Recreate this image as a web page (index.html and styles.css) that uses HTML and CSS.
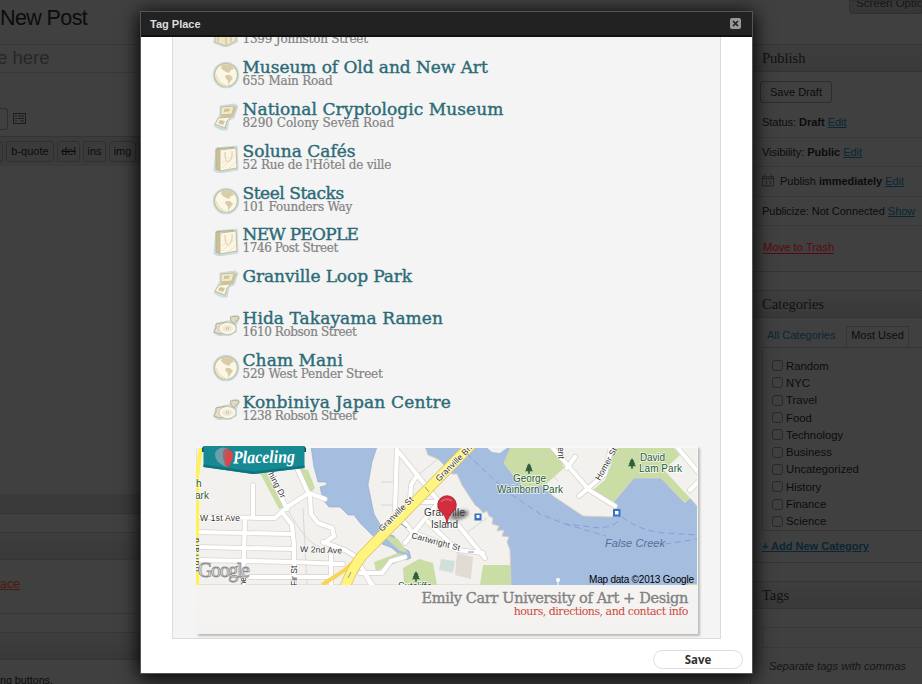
FILE: index.html
```html
<!DOCTYPE html>
<html lang="en">
<head>
<meta charset="utf-8">
<title>New Post</title>
<link rel="stylesheet" href="styles.css">
</head>
<body>
<svg class="defs" width="0" height="0" aria-hidden="true">
  <symbol id="globe" viewBox="0 0 28 28"><circle cx="14" cy="14" r="13.3" fill="#c5dde3"/><circle cx="14" cy="14" r="11.4" fill="#fbf7e8" stroke="#c9bd98" stroke-width="1.2"/><path d="M10 4Q15 2 20 5L22 8 19 9 17 12 14 11 11 9 9 7zM14 14L18 14 21 17 18 21 16 24 16 20 13 16z" fill="#d9cda9"/><path d="M4 14Q6 23 15 25" fill="none" stroke="#ece2c4" stroke-width="2"/></symbol>
  <symbol id="printer" viewBox="0 0 28 28"><path d="M8 3L23 1 26 3 22 15 17 17 15 27 9 27 2 23 6 15 8 11z" fill="#c8dde0" stroke="#c8dde0" stroke-width="1" stroke-linejoin="round"/><path d="M9 4L22 3 20 11 9 12z" fill="#f1e8ca" stroke="#c9bd98"/><path d="M22 3L25 4 21 14 9 15 9 12 20 11z" fill="#d0c29a"/><path d="M7 15L19 14 15 18 13 25 3 21 6 16z" fill="#fbf6e4" stroke="#c9bd98"/><path d="M8 17L13 18 11 22 6 20zM12 6l6-.5-1 3-5 .5z" fill="#cfc3a0"/></symbol>
  <symbol id="bag" viewBox="0 0 28 28"><path d="M4 3L25 1 26 25 7 28 2 26z" fill="#c8dde0" stroke="#c8dde0" stroke-width="1" stroke-linejoin="round"/><path d="M4 4L8 5 8 26 4 24z" fill="#cdbf98" stroke="#b5aa86" stroke-width=".7"/><path d="M8 5L24 3 25 23 8 26z" fill="#fbf6e4" stroke="#c9bd98"/><path d="M5 3.5l17-1" stroke="#b5aa86"/><path d="M13 7Q13 17 16 17Q21 14 20 6" fill="none" stroke="#e0cfae" stroke-width="1.2"/><path d="M10 18l7-6M10 23L24 10M16 24l8-7" stroke="#f0e6cf"/></symbol>
  <symbol id="plate" viewBox="0 0 28 28"><path d="M4 11L18 8 18 4 26 3 28 6 25 13 25 20 18 24 6 24 1 21 2 17z" fill="#c9dddf"/><path d="M4 12L14 10 23 13 23 20 8 22 2 20 4 16z" fill="#e6dec7" stroke="#b9b296"/><path d="M18 6Q21 3 27 5Q27 8 24 9L22 12 20 10z" fill="#e0d8bf" stroke="#b9b296"/><ellipse cx="15.500" cy="16.500" rx="8.700" ry="6" fill="#fbf8eb" stroke="#cbc3a8"/><ellipse cx="15.500" cy="16.500" rx="5.500" ry="3.600" fill="#efe9d7"/><path d="M14 18l1-3M16 18l1-3" stroke="#cbc3a8"/></symbol>
  <symbol id="box" viewBox="0 0 28 28"><path d="M3 14L25 14 26 23 14 29 1 24z" fill="#c8dde0"/><path d="M3 14L14 18 24 14 24 22 14 27 3 23z" fill="#efe5c6" stroke="#c9bd98"/><path d="M14 18v8M6 15v8M19 16v7" stroke="#d4c79f" stroke-width="1.5"/></symbol>
  <symbol id="tree" viewBox="0 0 10 13"><path d="M5 0L8 4 7 4 9 7 8 7 10 10 6 10 6 13 4 13 4 10 0 10 2 7 1 7 3 4 2 4z" fill="#2f5e3e"/></symbol>
</svg>

<div class="page">
  <main class="editor">
    <h1>New Post</h1>
    <div class="title-input">e here</div>
    <div class="media"><span class="media-btn"></span>
      <svg width="13" height="11" viewBox="0 0 13 11"><rect x=".5" y=".5" width="12" height="10" fill="none" stroke="#1c1c1c"/><path d="M2 3h2M2 5.5h2M2 8h2M5 3h6M5 5.5h6M7 8h4" stroke="#1c1c1c"/></svg>
    </div>
    <div class="quicktags"><span class="qt stub"></span><span class="qt q1">b-quote</span><span class="qt q2"><s>del</s></span><span class="qt q2">ins</span><span class="qt q3">img</span><span class="qt q3"></span></div>
    <div class="textarea"></div>
    <div class="editor-foot"></div>
    <section class="lbox first"><div class="bar"></div><p class="link">ace</p></section>
    <section class="lbox"><div class="bar"></div><p>ng buttons.</p></section>
  </main>
  <aside class="side">
    <div class="screen-options">Screen Options</div>
    <section class="pbox publish">
      <h2>Publish</h2>
      <span class="draft">Save Draft</span>
      <p class="r1">Status: <b>Draft</b> <a>Edit</a></p>
      <p class="r2">Visibility: <b>Public</b> <a>Edit</a></p>
      <p class="r3"><svg width="12" height="13" viewBox="0 0 13 13"><path d="M.5 2.5h12v10H.5zM.5 4.5h12M3 0v3M10 0v3M4 7h1v4M8 7h1v4" fill="none" stroke="#222"/></svg>Publish <b>immediately</b> <a>Edit</a></p>
      <p class="r4">Publicize: Not Connected <a>Show</a></p>
      <p class="trash"><span>Move to Trash</span></p>
    </section>
    <section class="pbox cats">
      <h2>Categories</h2>
      <div class="tabs"><span class="all">All Categories</span><span class="most">Most Used</span></div>
      <ul><li><i></i>Random</li><li><i></i>NYC</li><li><i></i>Travel</li><li><i></i>Food</li><li><i></i>Technology</li><li><i></i>Business</li><li><i></i>Uncategorized</li><li><i></i>History</li><li><i></i>Finance</li><li><i></i>Science</li></ul>
      <a class="add">+ Add New Category</a>
    </section>
    <section class="pbox tags">
      <h2>Tags</h2>
      <div class="tag-input"></div>
      <em>Separate tags with commas</em>
    </section>
  </aside>
</div>

<div class="modal">
  <header><span>Tag Place</span><svg width="11" height="11" viewBox="0 0 11 11"><rect width="11" height="11" rx="2" fill="#999"/><path d="M3 3l5 5M8 3l-5 5" stroke="#222" stroke-width="1.7"/></svg></header>
  <div class="panel">
    <ul class="places">
      <li><svg><use href="#box"/></svg><div><h3>Emily Carr University</h3><p>1399 Johnston Street</p></div></li>
      <li><svg><use href="#globe"/></svg><div><h3 class="t1">Museum of Old and New Art</h3><p>655 Main Road</p></div></li>
      <li><svg><use href="#printer"/></svg><div><h3 class="t2">National Cryptologic Museum</h3><p class="wide">8290 Colony Seven Road</p></div></li>
      <li><svg><use href="#bag"/></svg><div><h3 class="t3">Soluna Cafés</h3><p>52 Rue de l'Hôtel de ville</p></div></li>
      <li><svg><use href="#globe"/></svg><div><h3 class="t4">Steel Stacks</h3><p>101 Founders Way</p></div></li>
      <li><svg><use href="#bag"/></svg><div><h3 class="t5">NEW PEOPLE</h3><p class="tight">1746 Post Street</p></div></li>
      <li><svg><use href="#printer"/></svg><div><h3 class="t6">Granville Loop Park</h3></div></li>
      <li><svg><use href="#plate"/></svg><div><h3 class="t7">Hida Takayama Ramen</h3><p class="tight">1610 Robson Street</p></div></li>
      <li><svg><use href="#globe"/></svg><div><h3 class="t8">Cham Mani</h3><p>529 West Pender Street</p></div></li>
      <li><svg><use href="#plate"/></svg><div><h3 class="t9">Konbiniya Japan Centre</h3><p class="tight">1238 Robson Street</p></div></li>
    </ul>
    <div class="card">
      <svg class="map" viewBox="196 448 501 137" width="501" height="137">
        <rect x="196" y="448" width="501" height="137" fill="#a5bddf"/>
        <!-- land -->
        <path d="M196 447H425L428 455 438 459 446 467 452 474 457 474 462 485 475 505 479 508 483 513 487 511 489 516 493 518 492 524 499 526 497 531 504 530 502 536 509 537 507 542 510 550 511 585H196z" fill="#f3f1ee" stroke="#d8cfc4"/>
        <path d="M311 447L314 467 318 482 326 482 327 485 320 487 323 500 329 507 340 507 348 515 354 515 360 523 368 531 375 538 382 544 392 548 400 555 406 560 411 558 409 551 400 546 394 536 385 533 374 514 368 485 372 462 377 447z" fill="#a5bddf" stroke="#8fa9cd" stroke-width=".6"/>
        <path d="M486 447L492 452 500 453 508 447z" fill="#f3f1ee"/>
        <path d="M511 447L504 463 513 475 525 488 541 485 553 496 571 508 583 516 612 517 617 511 611 505 634 478 661 478 685 503 690 498 698 507V447z" fill="#f3f1ee" stroke="#d8cfc4"/>
        <path d="M511 447L504 463 513 475 525 488 541 485 545 485 564 468 558 447zM613 447L611 465 605 480 593 490 611 505 634 478 661 478 685 503 690 498 664 470 680 455 673 447zM260 473h8l7 17 10 17-6 2zM300 468l8 2 7 18-6 6zM380 533l18 6 10 14-8-2zM374 562l24-9 10 3-12 7-20 8zM403 568l16-9 14 4 4 22h-33zM483 565h27l1 20h-31zM688 584h9v2h-9z" fill="#c9dda5"/>
        <path d="M457 553l16 4-2 22-16-4z" fill="#e1dbd3"/><path d="M441 559l14 2-2 12-14-3z" fill="#d2e0dc"/>
        <!-- minor outlines -->
        <g fill="none" stroke="#d2d0cb" stroke-width=".8"><path d="M381 482h14M381 505h14M409 482L438 459M487 518L466 533M303 508l4 78M288 510q18 33 32 37M517 470l12-12 13-1 14-10M541 464l17 17M615 467l14-12 14-8M645 460l-8 18"/></g>
        <!-- streets: casing, then surface -->
        <g fill="none" stroke="#d7d3cd" stroke-width="5.6" stroke-linejoin="round" stroke-linecap="round"><path d="M197 517L275 518 287 507 309 493 325 499M197 532L293 534M197 547L293 549M197 560L294 562 343 564M250 577H334M253 485V518M245 518L243 586M282 512L292 525 294 545V586M297 468L310 497 311 514 318 523 332 528 334 536 324 543M268 470L287 509M323 542L345 550 355 556 372 586M331 555V586M397 448L395 510 412 532 457 550 483 553M397 450L435 497 485 558M438 502L410 502 411 485 416 477M438 503L405 543M428 522L457 550M360 573h22l9-12 14-4M360 565l15 24M552 447L589 490 615 506M579 496L605 474 611 447M567 468L575 457M677 447L698 472M690 490l8-8"/></g>
        <g fill="none" stroke="#fff" stroke-width="4.2" stroke-linejoin="round" stroke-linecap="round"><path d="M197 517L275 518 287 507 309 493 325 499M197 532L293 534M197 547L293 549M197 560L294 562 343 564M250 577H334M253 485V518M245 518L243 586M282 512L292 525 294 545V586M297 468L310 497 311 514 318 523 332 528 334 536 324 543M268 470L287 509M323 542L345 550 355 556 372 586M331 555V586M397 448L395 510 412 532 457 550 483 553M397 450L435 497 485 558M438 502L410 502 411 485 416 477M438 503L405 543M428 522L457 550M360 573h22l9-12 14-4M360 565l15 24M552 447L589 490 615 506M579 496L605 474 611 447M567 468L575 457M677 447L698 472M690 490l8-8"/></g>
        <path d="M322 585L345 570 360 556" fill="none" stroke="#f8d457" stroke-width="4"/>
        <path d="M343 592Q352 568 362 556L476 440" fill="none" stroke="#dfc663" stroke-width="11"/>
        <path d="M343 592Q352 568 362 556L476 440" fill="none" stroke="#fff57e" stroke-width="9.4"/>
        <path d="M201 447L197 475V586" fill="none" stroke="#fff255" stroke-width="4"/>
        <path d="M348 578l3-6M425 487l4 5M401 524l6 4M468 552h6" stroke="#8b9aa0"/>
        <!-- ferry routes -->
        <g fill="none" stroke="#8b9cdd" stroke-dasharray="6 4"><path d="M467 454L505 490 540 514 565 524 600 528Q619 526 620 516M565 524L606 536M622 517Q640 531 665 533L697 535M665 544L697 539"/></g>
        <g fill="#3873c4"><rect x="474.500" y="513.500" width="7" height="7"/><rect x="613" y="509" width="7.500" height="7.500"/></g>
        <g fill="#fff"><rect x="476.500" y="515" width="3" height="3"/><rect x="615" y="511" width="3.500" height="3.500"/><circle cx="558" cy="580" r="2"/></g><path d="M558 581v5" stroke="#fff"/>
        <use href="#tree" x="525" y="463" width="8" height="11"/><use href="#tree" x="628" y="458" width="8" height="11"/><use href="#tree" x="412" y="571" width="8" height="11"/>
        <!-- place names -->
        <g class="lbl">
          <text x="200" y="521" textLength="40">W 1st Ave</text><text x="300" y="552" textLength="42" transform="rotate(2 300 552)">W 2nd Ave</text>
          <text transform="translate(268 474) rotate(62)" textLength="28">hing Dr</text>
          <text transform="translate(297 586) rotate(-90)">Fir St</text><text transform="translate(246 594) rotate(-90)">Pine</text><text transform="translate(199 572) rotate(-90)" textLength="34">Burrard</text>
          <text transform="translate(382 532) rotate(-45)" textLength="45">Granville St</text><text transform="translate(439 482) rotate(-45)" textLength="62">Granville Bridge</text>
          <text transform="translate(411 538) rotate(15)" textLength="50">Cartwright St</text>
          <text transform="translate(600 481) rotate(-61)" textLength="36">Homer St</text><text transform="translate(558 447) rotate(90)">ent</text>
        </g>
        <g class="lbl big"><text x="424" y="516" textLength="41">Granville</text><text x="431" y="528" textLength="27">Island</text></g>
        <g class="lbl park"><text x="513" y="482" textLength="33">George</text><text x="497" y="493" textLength="66">Wainborn Park</text><text x="640" y="461" textLength="25">David</text><text x="639" y="472" textLength="43">Lam Park</text><text x="196" y="487">h</text><text x="195" y="499">ark</text><text x="398" y="590" textLength="34">Sutcliffe</text></g>
        <text class="creek" x="605" y="547" textLength="60">False Creek</text>
        <text class="copy" x="589" y="583" textLength="105">Map data ©2013 Google</text>
        <text class="google" x="198" y="577" textLength="52">Google</text>
        <!-- marker -->
        <ellipse cx="459" cy="515" rx="10" ry="4.500" fill="#333" opacity=".55" transform="rotate(-15 459 515)" class="shade"/>
        <path d="M447 524Q446 515 439.500 510.500A9.300 9.300 0 1 1 454.500 510.500Q448 515 447 524z" fill="#d22d3e" stroke="#a21d2c" stroke-width=".7"/><path d="M441 502a7 6 0 0 1 11-1" fill="none" stroke="#df5560" stroke-width="2"/>
      </svg>
      <svg class="ribbon" width="104" height="30" viewBox="202 445 104 30"><path d="M202 448l2-2h100l2 2v4H202z" fill="#075b67"/><path d="M203.500 446H304.500V468L253 474 203.500 467z" fill="#168993"/><path d="M203.500 464.500L253 471.500 304.500 465.500V468L253 474 203.500 467z" fill="#0d737e"/><path d="M226 467Q215 462 215 455A8 7 0 0 1 229 450Q226 458 226 467z" fill="#6ca0ab"/><path d="M226 467Q224 454 226 449A7 6 0 0 1 233 455Q233 461 228 467z" fill="#e14448"/><path d="M226 467Q221 456 224 449L228 448Q225 457 227 467z" fill="#a8606c"/><text class="script" x="233" y="463" textLength="62" lengthAdjust="spacingAndGlyphs" transform="rotate(-1 260 460)">Placeling</text></svg>
      <h4>Emily Carr University of Art + Design</h4>
      <p>hours, directions, and contact info</p>
    </div>
  </div>
  <div class="save">Save</div>
</div>
</body>
</html>
```
FILE: styles.css
```css
* { box-sizing: border-box; margin: 0; padding: 0; }
body { width: 922px; height: 684px; overflow: hidden; position: relative; background: #404040; font: 11px "Liberation Sans", Arial, sans-serif; color: #0c0c0c; }
ul { list-style: none; }
.defs { position: absolute; }
.page { display: grid; grid-template-columns: 750px 172px; height: 684px; overflow: hidden; }
.editor { display: flex; flex-direction: column; overflow: hidden; height: 684px; }
.editor > * { flex: none; }
h1 { height: 44px; font-size: 21.5px; font-weight: 400; line-height: 36px; letter-spacing: -.6px; }
.title-input { height: 29px; border: solid #383838; border-width: 1px 0; font-size: 18.5px; line-height: 26px; color: #272727; margin-left: -3px; }
.media { height: 63px; display: flex; align-items: flex-end; gap: 5px; padding-bottom: 1px; }
.media-btn { width: 8px; height: 22px; border: 1px solid #2d2d2d; border-left: 0; border-radius: 0 3px 3px 0; margin-bottom: 5px; }
.media svg { margin-bottom: 11px; }
.quicktags { height: 30px; display: flex; gap: 3px; padding: 4px 0; background: #3b3b3b; border-top: 1px solid #333; }
.qt { height: 21px; border: 1px solid #303030; border-radius: 3px; text-align: center; line-height: 18px; }
.stub { width: 4px; margin-left: -1px; }
.q1 { width: 48px; }
.q2 { width: 23px; }
.q3 { width: 27px; }
.textarea { height: 328px; }
.editor-foot { height: 20px; background: #3a3a3a; border-bottom: 1px solid #343434; }
.lbox { margin-top: 18px; height: 82px; border: solid #363636; border-width: 1px 0; }
.lbox .bar { height: 27px; border-bottom: 1px solid #353535; background: linear-gradient(#3e3e3e, #393939); }
.lbox p { line-height: 48px; }
.lbox p.link { font-size: 12.5px; color: #4b1b0d; text-decoration: underline; line-height: 49px; }
.lbox:last-child p { line-height: 40px; font-size: 10.7px; }
.side { display: flex; flex-direction: column; }
.side > * { flex: none; }
.screen-options { align-self: flex-end; width: 73px; height: 14px; padding-left: 6px; background: #373737; border: 1px solid #303030; border-radius: 0 0 0 3px; white-space: nowrap; overflow: hidden; line-height: 5px; font-size: 11.5px; color: #161616; }
.pbox { border: 1px solid #353535; border-right: 0; }
h2 { height: 27px; padding-left: 11px; font: 400 14.500px/27px "Liberation Serif", serif; color: #111; background: linear-gradient(#3e3e3e, #393939); border-bottom: 1px solid #333; }
.side a { color: #0a2634; text-decoration: underline; }
.publish { margin-top: 30px; height: 228px; }
.draft { display: block; width: 72px; height: 22px; margin: 9px 0 0 9px; border: 1px solid #2c2c2c; border-radius: 3px; text-align: center; line-height: 20px; }
.publish p { padding-left: 11px; height: 29.300px; line-height: 28px; border-bottom: 1px solid #393939; white-space: nowrap; letter-spacing: -.03px; }
.publish .r1 { margin-top: 4px; height: 31px; line-height: 31px; }
.r3 svg { margin-right: 6px; vertical-align: -2px; }
.publish .trash { height: auto; border: 0; padding: 14px 0 0 12px; line-height: 15px; color: #5c0710; font-size: 11.300px; }
.trash span { border-bottom: 1px solid #5c0710; }
.cats { margin-top: 18px; height: 273px; }
.tabs { display: flex; height: 29px; padding: 8px 0 0 11px; line-height: 19px; }
.all { width: 84px; padding-left: 5px; white-space: nowrap; color: #0a2634; }
.most { width: 63px; text-align: center; border: solid #353535; border-width: 1px 1px 0; line-height: 17px; }
.cats ul { margin-left: 11px; height: 184px; padding: 9px 0 0 9px; border: solid #353535; border-width: 1px 0 1px 1px; }
.cats li { display: flex; align-items: center; height: 17.300px; gap: 3px; font-size: 11.300px; }
.cats i { width: 11px; height: 11px; border: 1px solid #292929; border-radius: 3px; }
.add { display: block; margin: 9px 0 0 11px; font-weight: 700; font-size: 11px; }
.tags { margin-top: 18px; height: 140px; }
.tag-input { margin: 18px 0 0 11px; height: 21px; border: 1px solid #393939; border-right: 0; }
.tags em { display: block; padding: 12px 0 0 18px; font-size: 11.100px; white-space: nowrap; color: #151515; }

.modal { position: absolute; left: 141px; top: 12px; width: 611px; height: 661px; background: #fff; box-shadow: 0 0 0 1px #555, 0 3px 18px 2px #000; }
.modal header { height: 25px; padding: 0 11px 0 9px; display: flex; justify-content: space-between; align-items: center; background: #222; border-bottom: 2px solid #111; color: #ddd; font-weight: 700; font-size: 11px; }
.panel { margin-left: 31px; width: 549px; height: 602px; overflow: hidden; background: #f4f4f4; border: solid #dcdcdc; border-width: 0 1px 1px; }
.places { margin: -22px 0 0 39px; height: 431px; }
.places li { display: flex; gap: 2.500px; height: 41.875px; }
.places svg { width: 28px; height: 28px; margin-top: 4px; }
.places h3, .places p, .card h4, .card > p { font-family: "DejaVu Serif", serif; white-space: nowrap; font-weight: 400; }
.places h3 { font-size: 17px; line-height: 20px; color: #2c6b76; -webkit-text-stroke: .4px #2c6b76; }
.places .t1 { letter-spacing: -.06px; }
.places .t2 { letter-spacing: .06px; }
.places .t4 { letter-spacing: -.45px; }
.places .t5 { letter-spacing: -.75px; }
.places .t6 { letter-spacing: -.1px; }
.places .t7 { letter-spacing: .07px; }
.places .t8 { letter-spacing: .1px; }
.places .t9 { letter-spacing: .18px; }
.places p { margin-top: -3px; font-size: 12px; line-height: 14px; letter-spacing: -.2px; color: #828282; -webkit-text-stroke: .2px #828282; }
.places p.wide { letter-spacing: -.02px; }
.places p.tight { letter-spacing: -.4px; }
.card { position: relative; margin-left: 23px; width: 502px; height: 188px; padding-top: 2px; background: linear-gradient(#f9f7f5, #f3f2f0); box-shadow: 2px 2px 2px #bbb; }
.map { display: block; }
.ribbon { position: absolute; left: 6px; top: -1px; }
.card h4 { padding: 5px 10px 0 0; text-align: right; font-size: 14.500px; line-height: 17px; color: #828282; -webkit-text-stroke: .35px #828282; letter-spacing: -.35px; }
.card > p { padding-right: 10px; margin-top: -2px; text-align: right; font-size: 11px; line-height: 14px; color: #cb4a3c; letter-spacing: -.5px; }
.save { width: 90px; height: 19px; margin: 11px 0 0 512px; border: 1px solid #ddd; border-radius: 10px; text-align: center; font: 700 11.500px/17px "Open Sans", sans-serif; color: #333; }
.lbl text { font: 8.5px "Liberation Sans", sans-serif; fill: #333; stroke: #fff; stroke-opacity: .8; stroke-width: 1.5px; paint-order: stroke; }
.lbl.big text { font-size: 10px; }
.lbl.park text { font-size: 10px; fill: #275b35; }
.creek { font: italic 11px "Liberation Sans", sans-serif; fill: #52709d; }
.copy { font: 10px "Liberation Sans", sans-serif; fill: #000; }
.google { font: 20px "Liberation Serif", serif; fill: #eee; stroke: #8c8c8c; stroke-width: .8px; }
.script { font: italic 700 18px "Liberation Serif", serif; fill: #fff; }
.shade { filter: blur(1.5px); }
```
